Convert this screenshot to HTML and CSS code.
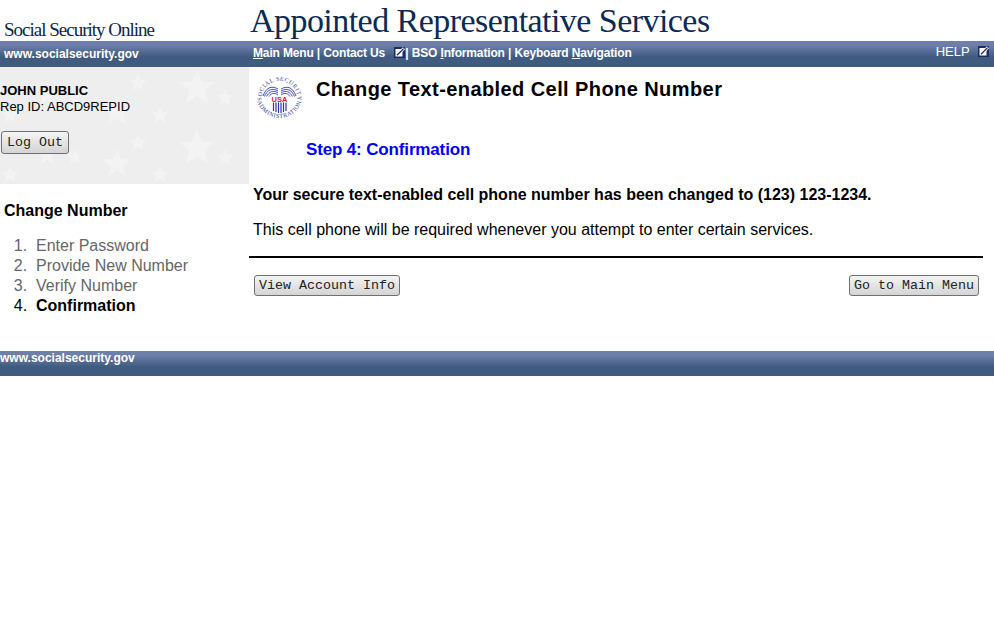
FILE: index.html
```html
<!DOCTYPE html>
<html lang="en">
<head>
  <meta charset="UTF-8" />
  <title>Appointed Representative Services</title>
  <link rel="stylesheet" href="styles.css">
</head>
<body>
  <header class="masthead">
    <div class="site-name">Social Security Online</div>
    <h1 class="app-name">Appointed Representative Services</h1>
  </header>
  <nav class="topbar">
    <a class="gov-link">www.socialsecurity.gov</a>
    <div class="topnav">
      <a><u>M</u>ain Menu</a> | <a>Contact Us</a>
      <svg class="ext-icon first" width="11" height="11" viewBox="0 0 11 11"><rect width="11" height="11" fill="#1c2a66"/><rect x="1.5" y="2" width="7" height="7.5" fill="#fff"/><path d="M3 8.2 L10 1.2" stroke="#fff" stroke-width="3"/><path d="M3 8.2 L9.6 1.6" stroke="#1c2a66" stroke-width="1.3"/></svg>| <a>BSO <u>I</u>nformation</a> | <a>Keyboard <u>N</u>avigation</a>
    </div>
    <div class="help">HELP
      <svg class="ext-icon" width="11" height="11" viewBox="0 0 11 11"><rect width="11" height="11" fill="#1c2a66"/><rect x="1.5" y="2" width="7" height="7.5" fill="#fff"/><path d="M3 8.2 L10 1.2" stroke="#fff" stroke-width="3"/><path d="M3 8.2 L9.6 1.6" stroke="#1c2a66" stroke-width="1.3"/></svg>
    </div>
  </nav>
  <div class="layout">
    <aside class="sidebar">
      <div class="user-box">
        <svg class="stars" width="249" height="117" viewBox="0 0 249 117">
          <defs><polygon id="star" points="0,-10 2.6,-3.2 9.5,-3.1 4.1,1.3 5.9,8.1 0,4.3 -5.9,8.1 -4.1,1.3 -9.5,-3.1 -2.6,-3.2"/></defs>
          <g fill="#f3f3f3">
            <use href="#star" transform="translate(138,16) scale(.9)"/>
            <use href="#star" transform="translate(197,21) scale(1.9)"/>
            <use href="#star" transform="translate(225,31) scale(.9)"/>
            <use href="#star" transform="translate(75,30) scale(.8)"/>
            <use href="#star" transform="translate(47,28) scale(1.1)"/>
            <use href="#star" transform="translate(160,48) scale(.9)"/>
            <use href="#star" transform="translate(117,45) scale(1.5)"/>
            <use href="#star" transform="translate(10,48) scale(.9)"/>
            <use href="#star" transform="translate(138,76) scale(.9)"/>
            <use href="#star" transform="translate(197,81) scale(1.9)"/>
            <use href="#star" transform="translate(225,91) scale(.9)"/>
            <use href="#star" transform="translate(75,90) scale(.8)"/>
            <use href="#star" transform="translate(47,88) scale(1.1)"/>
            <use href="#star" transform="translate(117,97) scale(1.5)"/>
            <use href="#star" transform="translate(160,108) scale(.9)"/>
            <use href="#star" transform="translate(10,108) scale(.9)"/>
          </g>
        </svg>
        <div class="user-name">JOHN PUBLIC</div>
        <div class="rep-id">Rep ID: ABCD9REPID</div>
        <button class="btn logout">Log Out</button>
      </div>
      <h2 class="side-title">Change Number</h2>
      <ol class="steps">
        <li>Enter Password</li>
        <li>Provide New Number</li>
        <li>Verify Number</li>
        <li class="current">Confirmation</li>
      </ol>
    </aside>
    <main class="content">
      <div class="page-head">
        <svg class="seal" width="47" height="47" viewBox="0 0 47 47">
          <defs>
            <path id="arcTop" d="M5.8 27 A18 18 0 1 1 41.2 27"/>
            <path id="arcBot" d="M0.600 22 A23 23 0 0 0 46.400 22"/>
          </defs>
          <text class="seal-text"><textPath href="#arcTop" startOffset="50%" text-anchor="middle">SOCIAL SECURITY</textPath></text>
          <text class="seal-text"><textPath href="#arcBot" startOffset="50%" text-anchor="middle">ADMINISTRATION</textPath></text>
          <g fill="none" stroke="#3438b4" stroke-width="0.9">
            <path d="M7 21 C10 13 15 10 22 14"/><path d="M8.500 21.500 C11 15 16 12.500 22 16"/><path d="M10.500 21.500 C13 17 17 14.500 22 18"/><path d="M13 21.500 C15 18.500 18 17 22 20"/>
            <path d="M40 21 C37 13 32 10 25 14"/><path d="M38.500 21.500 C36 15 31 12.500 25 16"/><path d="M36.500 21.500 C34 17 30 14.500 25 18"/><path d="M34 21.500 C32 18.500 29 17 25 20"/>
          </g>
          <text class="seal-usa" x="23.5" y="26.5" text-anchor="middle">USA</text>
          <g stroke="#3034a8" stroke-width="1.2">
            <path d="M17.500 27.500V36M20 27.500V37M22.500 27.500V38M25 27.500V38M27.500 27.500V37M30 27.500V36"/>
          </g>
        </svg>
        <h1 class="page-title">Change Text-enabled Cell Phone Number</h1>
      </div>
      <h2 class="step-title">Step 4: Confirmation</h2>
      <p class="message"><strong>Your secure text-enabled cell phone number has been changed to (123) 123-1234.</strong></p>
      <p class="message note">This cell phone will be required whenever you attempt to enter certain services.</p>
      <hr class="rule">
      <div class="actions">
        <button class="btn">View Account Info</button>
        <button class="btn">Go to Main Menu</button>
      </div>
    </main>
  </div>
  <footer class="footbar">www.socialsecurity.gov</footer>
</body>
</html>
```

FILE: styles.css
```css
body {
  font-family: "Liberation Sans", Arial, sans-serif;
  background: #fff;
  color: #000;
  margin: 0;
  padding: 0;
}
.masthead {
  height: 41px;
  display: flex;
  align-items: flex-end;
  overflow: hidden;
}
.site-name {
  width: 245px;
  padding-left: 4px;
  font-family: "Liberation Serif", serif;
  font-size: 19px;
  letter-spacing: -1px;
  line-height: 22px;
  color: #0e2748;
}
.app-name {
  margin: 0 0 0 1px;
  font-family: "Liberation Serif", serif;
  font-size: 34px;
  font-weight: normal;
  letter-spacing: -0.55px;
  line-height: 41px;
  color: #0b2a55;
}
.topbar, .footbar {
  background: linear-gradient(#6e80aa 0, #6e80aa 4px, #3f5b80 16px, #3f5b80 100%);
  color: #fff;
  font-weight: bold;
  font-size: 12px;
}
.topbar {
  height: 26px;
  display: flex;
  line-height: 26px;
}
.gov-link {
  width: 249px;
  padding-left: 4px;
  box-sizing: border-box;
}
.topnav {
  padding-left: 4px;
  line-height: 25px;
  letter-spacing: -0.15px;
}
.ext-icon {
  vertical-align: -1px;
}
.ext-icon.first {
  margin-left: 6px;
}
.help {
  margin-left: auto;
  padding-right: 5px;
  font-weight: normal;
  font-size: 13px;
  line-height: 22px;
}
.help .ext-icon {
  margin-left: 5px;
}
.layout {
  display: flex;
  height: 284px;
}
.sidebar {
  width: 249px;
  flex-shrink: 0;
}
.user-box {
  position: relative;
  height: 117px;
  box-sizing: border-box;
  padding-top: 16px;
  background: #eeeeee;
  font-size: 13px;
  line-height: 16px;
}
.stars {
  position: absolute;
  left: 0;
  top: 0;
}
.user-name, .rep-id, .logout {
  position: relative;
}
.user-name {
  font-weight: bold;
}
.btn {
  height: 21px;
  padding: 0 4px;
  font-family: "Liberation Mono", monospace;
  font-size: 13.33px;
  color: #222;
  background: linear-gradient(#f4f4f4, #d4d4d4);
  border: 1px solid #707070;
  border-radius: 3px;
}
.logout {
  display: block;
  height: 23px;
  padding: 0 5px;
  margin: 16px 0 0 1px;
}
.side-title {
  margin: 18px 0 0 4px;
  font-size: 16px;
  line-height: 18px;
}
.steps {
  margin: 16px 0 0;
  padding-left: 36px;
  font-size: 16px;
  line-height: 20px;
  color: #666;
}
.steps li::marker {
  content: counter(list-item) ".\00a0\00a0";
  font-weight: normal;
}
.steps .current {
  color: #000;
  font-weight: bold;
}
.content {
  flex: 1;
  padding: 0 11px 0 0;
}
.page-head {
  display: flex;
  padding: 8px 0 0 7px;
  height: 51px;
}
.page-title {
  margin: 2px 0 0 13px;
  font-size: 20px;
  line-height: 25px;
  letter-spacing: 0.42px;
}
.step-title {
  margin: 14px 0 0 57px;
  font-size: 17px;
  letter-spacing: -0.15px;
  line-height: 20px;
  color: #0000ff;
}
.message {
  margin: 0 0 0 4px;
  font-size: 16px;
  line-height: 20px;
}
h2 + .message {
  margin-top: 25px;
}
.note {
  margin-top: 15px;
}
.rule {
  margin: 16px 0 0;
  border: 0;
  border-top: 2px solid #000;
}
.actions {
  display: flex;
  justify-content: space-between;
  margin: 17px 4px 0 5px;
}
.footbar {
  height: 25px;
  line-height: 15px;
}
.seal-text {
  font-family: "Liberation Serif", serif;
  font-size: 6px;
  letter-spacing: 0.5px;
  fill: #3438b4;
}
.seal-usa {
  font-size: 7.5px;
  font-weight: bold;
  fill: #d8213f;
}
```
